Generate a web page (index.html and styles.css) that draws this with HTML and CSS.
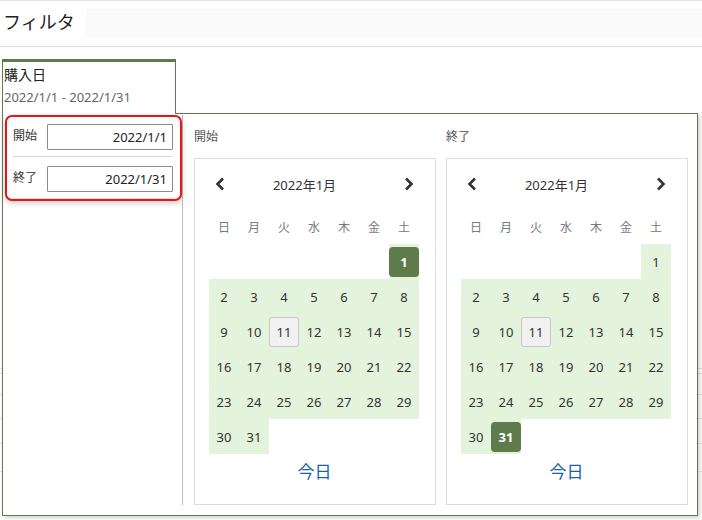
FILE: index.html
```html
<!DOCTYPE html>
<html lang="ja">
<head>
<meta charset="utf-8">
<link rel="stylesheet" href="styles.css">
</head>
<body>
<div class="page">
  <div class="topline"></div>
  <header class="filter-bar">
    <div class="filter-title">フィルタ</div>
    <div class="filter-search"></div>
  </header>
  <div class="tabs">
    <div class="tab">
      <div class="tab-name">購入日</div>
      <div class="tab-value">2022/1/1 - 2022/1/31</div>
    </div>
  </div>
  <div class="bg-table">
    <div class="bg-row r0"></div>
    <div class="bg-row r1"></div>
    <div class="bg-row r2"></div>
    <div class="bg-row r3"></div>
    <div class="bg-row r4"></div>
  </div>

  <div class="popup">
    <div class="side">
      <div class="range-box">
        <div class="range-row first">
          <span class="range-label">開始</span>
          <input class="range-input" type="text" value="2022/1/1">
        </div>
        <div class="range-row second">
          <span class="range-label">終了</span>
          <input class="range-input" type="text" value="2022/1/31">
        </div>
      </div>
    </div>
    <div class="cals">
      <div class="cal-col">
        <div class="cal-label">開始</div>
        <div class="cal">
          <div class="cal-head">
            <svg class="chev" width="10" height="14" viewBox="0 0 10 14"><polyline points="8,1.5 2.5,7 8,12.5" fill="none" stroke="#333" stroke-width="2.6"/></svg>
            <span class="cal-title">2022年1月</span>
            <svg class="chev" width="10" height="14" viewBox="0 0 10 14"><polyline points="2,1.5 7.5,7 2,12.5" fill="none" stroke="#333" stroke-width="2.6"/></svg>
          </div>
          <div class="cal-grid">
            <span class="wd">日</span><span class="wd">月</span><span class="wd">火</span><span class="wd">水</span><span class="wd">木</span><span class="wd">金</span><span class="wd">土</span>
            <span class="d"></span><span class="d"></span><span class="d"></span><span class="d"></span><span class="d"></span><span class="d"></span><span class="d in"><b class="sel">1</b></span>
            <span class="d in">2</span><span class="d in">3</span><span class="d in">4</span><span class="d in">5</span><span class="d in">6</span><span class="d in">7</span><span class="d in">8</span>
            <span class="d in">9</span><span class="d in">10</span><span class="d in"><i class="today">11</i></span><span class="d in">12</span><span class="d in">13</span><span class="d in">14</span><span class="d in">15</span>
            <span class="d in">16</span><span class="d in">17</span><span class="d in">18</span><span class="d in">19</span><span class="d in">20</span><span class="d in">21</span><span class="d in">22</span>
            <span class="d in">23</span><span class="d in">24</span><span class="d in">25</span><span class="d in">26</span><span class="d in">27</span><span class="d in">28</span><span class="d in">29</span>
            <span class="d in">30</span><span class="d in">31</span>
          </div>
          <div class="cal-today">今日</div>
        </div>
      </div>
      <div class="cal-col">
        <div class="cal-label">終了</div>
        <div class="cal">
          <div class="cal-head">
            <svg class="chev" width="10" height="14" viewBox="0 0 10 14"><polyline points="8,1.5 2.5,7 8,12.5" fill="none" stroke="#333" stroke-width="2.6"/></svg>
            <span class="cal-title">2022年1月</span>
            <svg class="chev" width="10" height="14" viewBox="0 0 10 14"><polyline points="2,1.5 7.5,7 2,12.5" fill="none" stroke="#333" stroke-width="2.6"/></svg>
          </div>
          <div class="cal-grid">
            <span class="wd">日</span><span class="wd">月</span><span class="wd">火</span><span class="wd">水</span><span class="wd">木</span><span class="wd">金</span><span class="wd">土</span>
            <span class="d"></span><span class="d"></span><span class="d"></span><span class="d"></span><span class="d"></span><span class="d"></span><span class="d in">1</span>
            <span class="d in">2</span><span class="d in">3</span><span class="d in">4</span><span class="d in">5</span><span class="d in">6</span><span class="d in">7</span><span class="d in">8</span>
            <span class="d in">9</span><span class="d in">10</span><span class="d in"><i class="today">11</i></span><span class="d in">12</span><span class="d in">13</span><span class="d in">14</span><span class="d in">15</span>
            <span class="d in">16</span><span class="d in">17</span><span class="d in">18</span><span class="d in">19</span><span class="d in">20</span><span class="d in">21</span><span class="d in">22</span>
            <span class="d in">23</span><span class="d in">24</span><span class="d in">25</span><span class="d in">26</span><span class="d in">27</span><span class="d in">28</span><span class="d in">29</span>
            <span class="d in">30</span><span class="d in"><b class="sel">31</b></span>
          </div>
          <div class="cal-today">今日</div>
        </div>
      </div>
    </div>
  </div>
</div>
</body>
</html>
```
FILE: styles.css
```css
* { box-sizing: border-box; }
html, body { margin: 0; padding: 0; background: #fff; }
body {
  font-family: "Noto Sans", "Noto Sans CJK JP", sans-serif;
  color: #333;
  width: 702px;
  height: 520px;
  overflow: hidden;
}
.page { position: relative; width: 702px; height: 520px; }
.topline { height: 1px; background: #dde3e9; }
.filter-bar {
  display: flex;
  align-items: flex-start;
  height: 46px;
  border-bottom: 1px solid #dedede;
  padding-left: 3px;
}
.filter-title {
  font-family: "Noto Sans CJK JP", sans-serif;
  font-size: 18px;
  line-height: 24px;
  width: 83px;
  color: #222;
  margin-top: 8px;
}
.filter-search {
  flex: 1;
  height: 28px;
  background: #fafafa;
  margin-top: 8px;
}
.tabs { padding: 12px 0 0 2px; }
.tab {
  position: relative;
  z-index: 2;
  width: 174px;
  height: 55px;
  background: #fff;
  border-top: 3px solid #5f7a4b;
  border-left: 1px solid #5f7a4b;
  border-right: 1px solid #5f7a4b;
  padding: 2px 0 0 1px;
}
.tab-name {
  font-family: "Noto Sans CJK JP", sans-serif;
  font-size: 14px;
  line-height: 20px;
  color: #222;
}
.tab-value {
  font-size: 13px;
  line-height: 18px;
  margin-top: 4px;
  color: #666;
}
.bg-table { margin-top: 254px; }
.bg-row { border-top: 1px solid #e2e2e2; }
.r0 { height: 5px; }
.r1 { height: 21px; }
.r2 { height: 24px; }
.r3 { height: 25px; }
.r4 { height: 29px; border-bottom: 1px solid #e2e2e2; }

.popup {
  position: absolute;
  z-index: 1;
  left: 2px;
  top: 113px;
  width: 696px;
  height: 403px;
  background: #fff;
  border: 1px solid #5f7a4b;
  box-shadow: 2px 2px 4px rgba(0,0,0,0.18);
  display: flex;
}
.side {
  width: 180px;
  margin: 1px 0 10px 0;
  padding-left: 2px;
  border-right: 1px solid #bdbdbd;
}
.range-box {
  width: 177px;
  margin-left: 0;
  border: 2px solid #e8141c;
  border-radius: 7px;
  box-shadow: 0 2px 6px rgba(0,0,0,0.22);
  background: #fff;
  padding: 0 7px 0 6px;
}
.range-row {
  display: flex;
  align-items: center;
  border-bottom: 1px solid #dcdcdc;
}
.range-row.first { padding: 7px 0 6px; }
.range-row.second { padding: 9px 0 6px; }
.range-label {
  font-family: "Noto Sans CJK JP", sans-serif;
  font-size: 12px;
  width: 34px;
  color: #333;
  line-height: 16px;
  margin-top: -4px;
}
.range-input {
  width: 126px;
  height: 26px;
  border: 1px solid #8c8c8c;
  border-radius: 1px;
  padding: 0 5px 0 0;
  text-align: right;
  font-family: "Noto Sans", sans-serif;
  font-size: 13px;
  color: #222;
  background: #fff;
  margin: 0;
}
.cals {
  display: flex;
  gap: 10px;
  padding-left: 11px;
}
.cal-col { width: 242px; padding-top: 14px; }
.cal-label {
  font-family: "Noto Sans CJK JP", sans-serif;
  font-size: 12px;
  line-height: 16px;
  color: #555;
  margin-bottom: 14px;
}
.cal {
  height: 347px;
  border: 1px solid #dcdcdc;
  padding: 0 15px 16px 14px;
}
.cal-head {
  height: 50px;
  display: flex;
  align-items: center;
  justify-content: space-between;
  padding: 0 6px 0 6px;
}
.chev { display: block; }
.cal-title {
  font-family: "Noto Sans", "Noto Sans CJK JP", sans-serif;
  font-size: 13px;
  color: #333;
  margin-right: 20px;
}
.cal-grid {
  display: grid;
  grid-template-columns: repeat(7, 30px);
  grid-template-rows: 35px repeat(6, 35px);
}
.wd {
  font-family: "Noto Sans CJK JP", sans-serif;
  font-size: 12px;
  color: #737c85;
  display: flex;
  align-items: center;
  justify-content: center;
  padding-bottom: 1px;
}
.d {
  display: flex;
  align-items: center;
  justify-content: center;
  font-size: 13px;
  color: #333;
}
.d.in { background: #e3f3dc; }
.sel {
  display: flex;
  align-items: center;
  justify-content: center;
  width: 30px;
  height: 30px;
  margin-top: 1px;
  background: #5f7a4b;
  color: #fff;
  font-weight: bold;
  border-radius: 4px;
}
.today {
  display: flex;
  align-items: center;
  justify-content: center;
  width: 30px;
  height: 30px;
  margin-top: 1px;
  font-style: normal;
  background: #f1f1f1;
  border: 1.5px solid #c8c8c8;
  border-radius: 3px;
}
.cal-today {
  font-family: "Noto Sans CJK JP", sans-serif;
  height: 34px;
  line-height: 34px;
  text-align: center;
  font-size: 17px;
  color: #1d5ea8;
}
```
